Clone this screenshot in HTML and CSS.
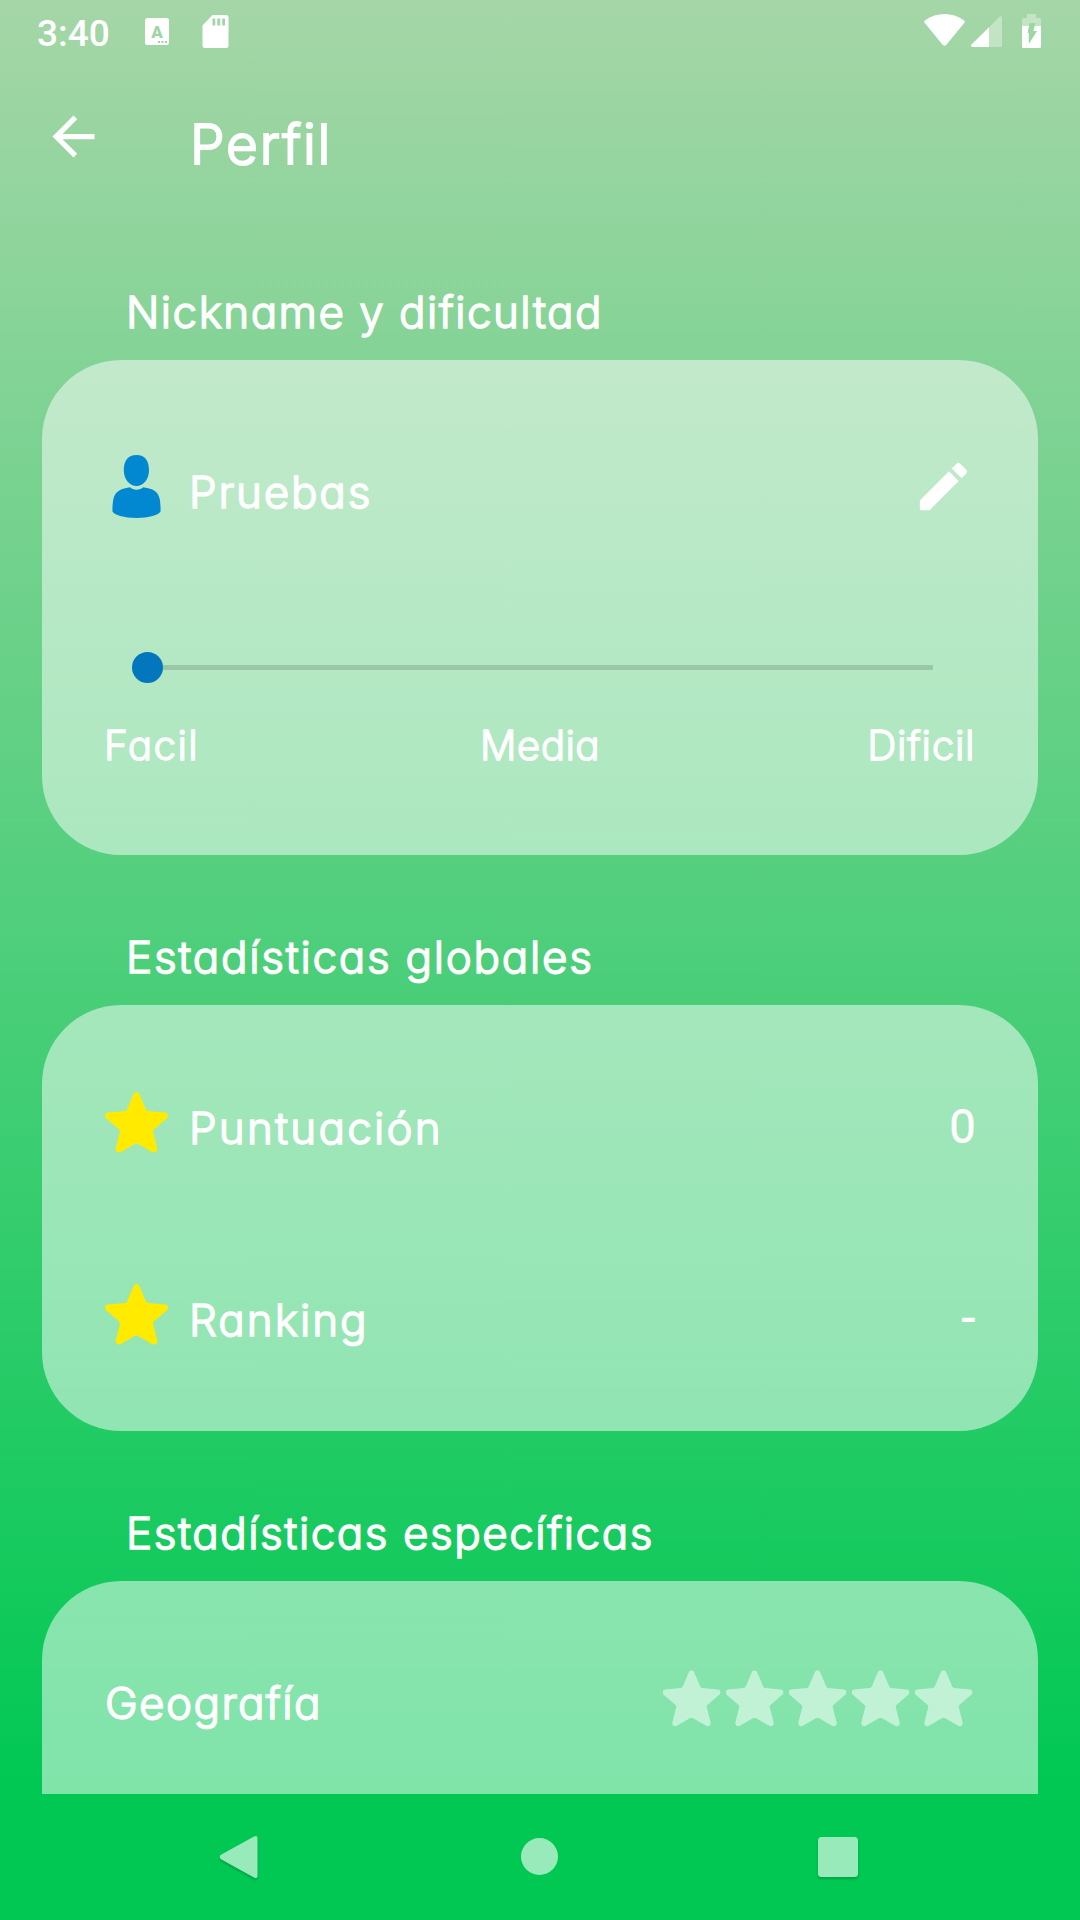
FILE: index.html
```html
<!DOCTYPE html>
<html lang="es">
<head>
<meta charset="utf-8">
<title>Perfil</title>
<link rel="stylesheet" href="styles.css">
</head>
<body>
<svg class="sprite" aria-hidden="true">
  <symbol id="star" viewBox="0 0 63 63">
    <path d="M28.6 3C29.6 .3 33.4 .3 34.4 3L41 18.6Q41.6 19.8 43 20L60.2 21.6C63 22 64 25 62 27.2L48.8 38.6Q47.8 39.4 48.1 41L52.3 57.6C52.8 60.5 50 62.5 47.4 61.2L33.3 52.9Q31.5 51.8 29.7 52.9L15.6 61.2C13 62.5 10.2 60.5 10.7 57.6L14.9 41Q15.2 39.4 14.2 38.6L1 27.2C-1 25 0 22 2.8 21.6L20 20Q21.4 19.8 22 18.6Z"/>
  </symbol>
</svg>
<div class="screen">
  <div class="statusbar">
    <span class="clock">3:40</span>
    <svg class="ic-keyboard" width="24" height="27" viewBox="0 0 24 27"><rect width="24" height="27" rx="2.5" fill="#fff"/><text x="12" y="19.5" class="keyletter">A</text><path d="M13 23h2v2h-2zM16.500 23h2v2h-2zM20 23h2v2h-2z" fill="#9fd6a5"/></svg>
    <svg class="ic-sd" width="27" height="33" viewBox="0 0 27 33"><path fill="#fff" fill-rule="evenodd" d="M10.500 0H24a2.500 2.500 0 0 1 2.500 2.500V30.500A2.500 2.500 0 0 1 24 33H3A2.500 2.500 0 0 1 .5 30.500V10.500ZM10.500 3.500V10.500H13.300V3.500ZM15.300 3.500V10.500H18.200V3.500ZM20.200 3.500V10.500H23V3.500Z"/></svg>
    <span class="spacer"></span>
    <svg class="ic-wifi" width="41" height="32" viewBox="0 0 41 32"><path fill="#fff" d="M.6 8.800Q-.4 7.300 1.200 6.200C12.500-2 28.500-2 39.800 6.200Q41.400 7.300 40.400 8.800L22.200 31Q20.500 32.600 18.800 31Z"/></svg>
    <svg class="ic-signal" width="31" height="31" viewBox="0 0 31 31"><path fill="#fff" fill-opacity=".35" d="M18 11.200 28.600.6Q31-.6 31 2V29.500Q31 31 29.500 31H18Z"/><path fill="#fff" d="M18 11.200V31H1.500Q-.8 30.400.5 28.600Z"/></svg>
    <svg class="ic-battery" width="19" height="34" viewBox="0 0 19 34"><path fill="#fff" fill-opacity=".35" d="M5 0h9v4h3.500Q19 4 19 5.500V12H0V5.500Q0 4 1.500 4H5Z"/><path fill="#fff" d="M0 12H19V32.500Q19 34 17.500 34H1.500Q0 34 0 32.500Z"/><path fill="#9bd6a3" d="M7.500 9H13.500L11.300 17H15L6.800 30V19H5.700Z"/></svg>
  </div>

  <header class="appbar">
    <svg class="back" width="63" height="63" viewBox="0 0 24 24"><path fill="#fff" d="M20 11H7.830l5.590-5.590L12 4l-8 8 8 8 1.410-1.410L7.830 13H20v-2z"/></svg>
    <h1 class="title">Perfil</h1>
  </header>

  <main class="content">
    <section class="section">
      <h2 class="heading h-nick">Nickname y dificultad</h2>
      <div class="card card-profile">
        <div class="row">
          <svg class="row-icon" viewBox="0 0 63 63"><path fill="#0288d1" d="M31.500 0C40 0 44 5.500 44 15.500 44 24 38.500 31 31.500 31S18.800 24 18.800 15.500C18.800 5.500 23 0 31.500 0ZM25 32.200C27.500 35.500 35.500 35.500 38.200 32.200 49 33.800 53.500 37 54.800 44.500 55.300 48 55.800 53 55.500 56.500 54 60 44 63 31.500 63S9 60 7.500 56.500C7.300 53 7.600 48 8.300 44.500 9.800 37 14.500 33.800 25 32.200Z"/></svg>
          <span class="label l-pruebas">Pruebas</span>
          <svg class="edit" width="63" height="63" viewBox="0 0 24 24"><path fill="#fff" d="M3 17.460v3.040c0 .28.220.5.500.500h3.040c.13 0 .26-.05.350-.150L17.810 9.940l-3.750-3.750L3.150 17.100c-.1.100-.150.220-.150.360zM20.710 7.040c.39-.39.390-1.020 0-1.410l-2.340-2.340c-.39-.39-1.020-.39-1.410 0l-1.830 1.830 3.750 3.750 1.830-1.830z"/></svg>
        </div>
        <div class="slider"><div class="thumb"></div></div>
        <div class="ticks">
          <span class="t-facil">Facil</span>
          <span class="t-media">Media</span>
          <span class="t-dificil">Dificil</span>
        </div>
      </div>
    </section>

    <section class="section">
      <h2 class="heading h-glob">Estadísticas globales</h2>
      <div class="card card-global">
        <div class="row">
          <svg class="row-icon gold"><use href="#star"/></svg>
          <span class="label l-punt">Puntuación</span>
          <span class="value">0</span>
        </div>
        <div class="row">
          <svg class="row-icon gold"><use href="#star"/></svg>
          <span class="label l-rank">Ranking</span>
          <span class="value">-</span>
        </div>
      </div>
    </section>

    <section class="section">
      <h2 class="heading h-esp">Estadísticas específicas</h2>
      <div class="card card-specific">
        <div class="row">
          <span class="label l-geo">Geografía</span>
          <div class="rating">
            <svg><use href="#star"/></svg>
            <svg><use href="#star"/></svg>
            <svg><use href="#star"/></svg>
            <svg><use href="#star"/></svg>
            <svg><use href="#star"/></svg>
          </div>
        </div>
      </div>
    </section>
  </main>

  <nav class="navbar">
    <svg class="navicon" width="60" height="60" viewBox="0 0 60 60"><path d="M9 27.800 42 9.500Q45.500 8 45.500 11V49Q45.500 52 42 50.500L9 32.200Q6.500 30 9 27.800Z"/></svg>
    <svg width="60" height="60" viewBox="0 0 60 60"><circle cx="29.500" cy="29.500" r="18.500"/></svg>
    <svg class="navicon" width="60" height="60" viewBox="0 0 60 60"><rect x="10" y="10" width="40" height="40" rx="3.500"/></svg>
  </nav>
</div>
</body>
</html>
```
FILE: styles.css
```css
* { box-sizing: border-box; margin: 0; padding: 0; }

body {
  font-family: Inter, "Open Sans", sans-serif;
  font-weight: 300;
  font-feature-settings: "cv11";
  color: #fff;
}

svg { display: block; flex: none; }
.sprite { position: absolute; width: 0; height: 0; }

.screen {
  display: flex;
  flex-direction: column;
  width: 1080px;
  height: 1920px;
  overflow: hidden;
  background: linear-gradient(#a5d6a7 0, #00c853 1794px);
}

/* System status bar */
.statusbar {
  display: flex;
  align-items: flex-start;
  flex: none;
  height: 63px;
  padding: 0 39px 0 37px;
}
.clock { width: 108px; padding-top: 12px; font: 500 37px/43px Roboto, sans-serif; }
.keyletter { font: 900 17px Roboto, sans-serif; text-anchor: middle; fill: #9fd6a5; }
.ic-keyboard { margin-top: 18px; }
.ic-sd { margin: 15px 0 0 33px; }
.spacer { flex: 1; }
.ic-wifi { margin-top: 14px; }
.ic-signal { margin: 16px 0 0 6px; }
.ic-battery { margin: 14px 0 0 20px; }

/* App bar */
.appbar {
  display: flex;
  align-items: center;
  flex: none;
  height: 147px;
  padding-left: 42px;
}
.title {
  margin: 15px 0 0 85px;
  font-size: 55px;
  line-height: 70px;
  font-weight: 300;
  letter-spacing: 1.8px;
  -webkit-text-stroke: 2px #fff;
}

/* Scrolling content */
.content { flex: 1; min-height: 0; overflow: hidden; padding: 0 42px; }
.section { padding-top: 72.600px; }
.heading {
  height: 77.400px;
  padding: 1.500px 0 0 84px;
  font-size: 44px;
  line-height: 56px;
  font-weight: 300;
  -webkit-text-stroke: 1.5px #fff;
  white-space: nowrap;
}
.h-nick { letter-spacing: 1.45px; }
.h-glob { letter-spacing: 1.720px; }
.h-esp { letter-spacing: 1.520px; }

.card {
  padding: 0 63px;
  border-radius: 79px;
  background: rgba(255, 255, 255, .5);
}
.card-profile { height: 495px; padding-top: 95px; }
.card-global { height: 426px; padding-top: 86px; display: flex; flex-direction: column; gap: 129px; }
.card-specific { height: 426px; padding-top: 86px; }

.row { display: flex; align-items: center; height: 63px; }
.row-icon { width: 63px; height: 63px; margin-right: 21px; }
.gold { fill: #ffea00; }
.label {
  padding-top: 12px;
  font-size: 44px;
  line-height: 56px;
  -webkit-text-stroke: 1.5px #fff;
}
.l-pruebas { letter-spacing: 1.800px; }
.l-punt { letter-spacing: 2.200px; }
.l-rank { letter-spacing: 2px; }
.l-geo { padding-top: 10px; letter-spacing: 1.400px; }
.edit { margin-left: auto; }
.value {
  margin-left: auto;
  padding-top: 9px;
  font: 300 45px/56px Roboto, sans-serif;
  -webkit-text-stroke: 2px #fff;
}
.rating { display: flex; margin-left: auto; }
.rating svg { width: 63px; height: 63px; padding: 2.500px; fill: #fff; fill-opacity: .5; }

/* Difficulty slider */
.slider {
  display: flex;
  align-items: center;
  height: 5px;
  margin: 147px 42px 0 43px;
  background: rgba(0, 0, 0, .14);
}
.thumb { width: 31px; height: 31px; margin-left: -16px; border-radius: 50%; background: #0277bd; flex: none; }
.ticks {
  display: grid;
  grid-template-columns: 1fr auto 1fr;
  margin-top: 51px;
  font-size: 40.500px;
  line-height: 50px;
  -webkit-text-stroke: 1.300px #fff;
}
.ticks .t-facil { margin-left: -1px; letter-spacing: 1.400px; }
.ticks .t-media { letter-spacing: .35px; }
.ticks .t-dificil { justify-self: end; letter-spacing: .6px; }

/* System navigation bar */
.navbar {
  display: flex;
  justify-content: center;
  align-items: center;
  gap: 238px;
  flex: none;
  height: 126px;
  fill: #99eaba;
}
.navicon { filter: drop-shadow(0 2px 1px rgba(0, 0, 0, .18)); }
```
